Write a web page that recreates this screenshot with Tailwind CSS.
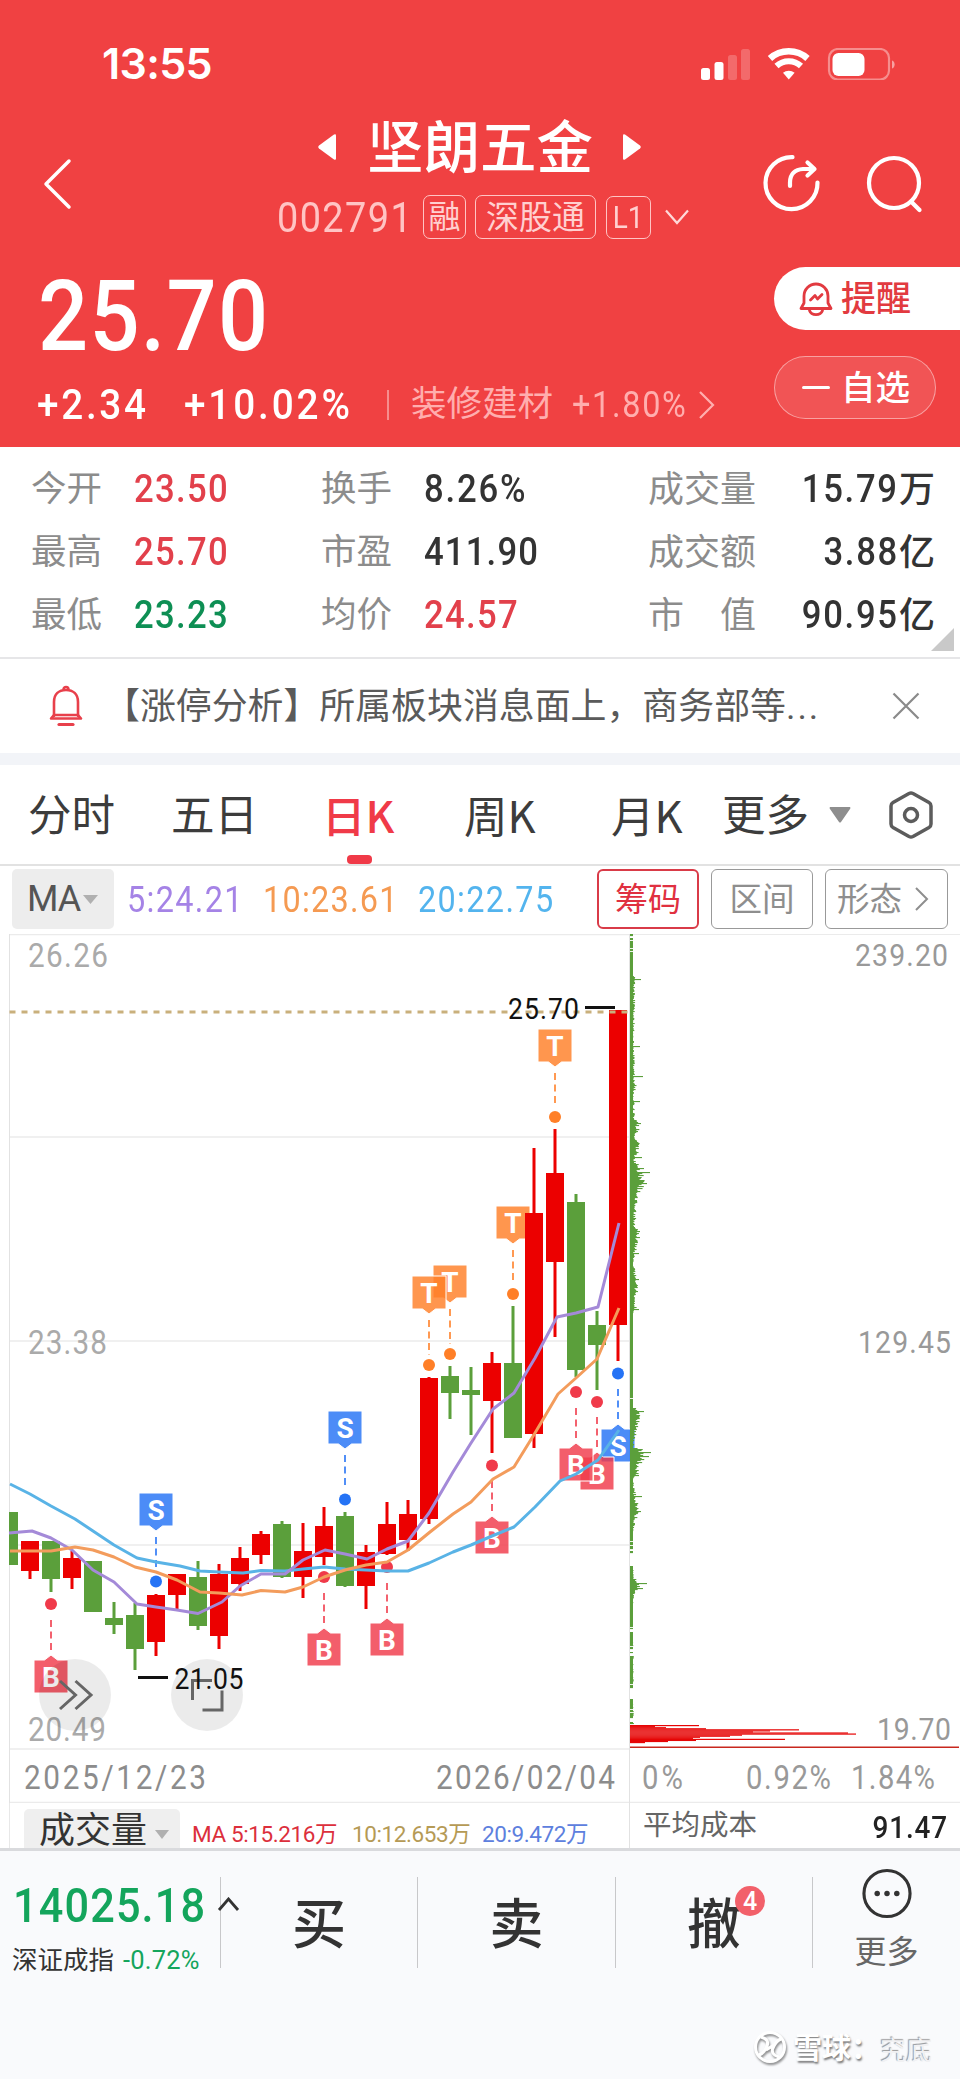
<!DOCTYPE html>
<html lang="zh-CN">
<head>
  <meta charset="UTF-8" />
  <meta name="viewport" content="width=device-width, initial-scale=1.0" />
  <title>坚朗五金 002791</title>
  <script src="https://cdn.jsdelivr.net/npm/@tailwindcss/browser@4"></script>
</head>
<body class="w-[960px] bg-white text-[#333] font-[Roboto,'Noto_Sans_CJK_SC',sans-serif] leading-none whitespace-nowrap overflow-x-hidden">

  <!-- Header -->
  <header class="h-[447px] bg-[#f04142] text-white">
    <!-- Status bar -->
    <div class="h-[127px] flex items-center justify-between pl-[102px] pr-[65px]">
      <span class="text-[43px] font-semibold font-[Inter,sans-serif] tracking-[-0.700px]">13:55</span>
      <svg class="w-[194px] h-[32px]" viewBox="0 0 194 32" fill="none">
        <rect x="0" y="20" width="9" height="12" rx="2.500" fill="#fff"/>
        <rect x="13.500" y="14" width="9" height="18" rx="2.500" fill="#fff"/>
        <rect x="27" y="7" width="9" height="25" rx="2.500" fill="#fff" fill-opacity=".22"/>
        <rect x="40" y="1" width="9" height="31" rx="2.500" fill="#fff" fill-opacity=".22"/>
        <path d="M69 10.500a28 28 0 0 1 37.500 0" stroke="#fff" stroke-width="6.500"/>
        <path d="M75.500 18a18 18 0 0 1 24.500 0" stroke="#fff" stroke-width="6"/>
        <path d="M82 24.800a9 9 0 0 1 11.600 0L87.800 31.500z" fill="#fff"/>
        <rect x="128" y="1" width="60" height="30.500" rx="9" stroke="#fff" stroke-opacity=".4" stroke-width="2.200"/>
        <rect x="131.500" y="5" width="32" height="23" rx="6" fill="#fff"/>
        <path d="M191 12.500c3.500 1 3.500 7 0 8z" fill="#fff" fill-opacity=".5"/>
      </svg>
    </div>

    <!-- Title -->
    <div class="h-[130px] flex">
      <svg class="w-[32px] h-[56px] ml-[42px] mt-[29px]" viewBox="0 0 32 56" fill="none" stroke="#fff" stroke-width="3.500" stroke-linecap="round" stroke-linejoin="round"><path d="M27 5 4 28 27 51"/></svg>
      <div class="ml-[203px] w-[412px]">
        <div class="h-[40px] flex items-center ml-[41px]">
          <svg class="w-[18px] h-[28px]" viewBox="0 0 18 28" fill="#fff"><path d="M16 1.500q2-1 2 1v23q0 2-2 1L1 15.500q-1.500-1.500 0-3z"/></svg>
          <h1 class="text-[56.500px] font-medium ml-[31px] mr-[30px] pt-[4px]">坚朗五金</h1>
          <svg class="w-[18px] h-[28px]" viewBox="0 0 18 28" fill="#fff"><path d="M2 1.500q-2-1-2 1v23q0 2 2 1l15-11q1.500-1.500 0-3z"/></svg>
        </div>
        <div class="mt-[27px] h-[46px] flex items-center text-[#ffd0d0]">
          <span class="w-[146px] text-[42px] text-[#ffc4c4] pt-[2px]"><span class="inline-block origin-left scale-x-[.9] tracking-[1.600px]">002791</span></span>
          <span class="w-[43px] h-[44px] rounded-[7px] border-[1.500px] border-[#ffc4c4] text-[32px] leading-[43px] text-center">融</span>
          <span class="w-[121px] h-[44px] rounded-[7px] border-[1.500px] border-[#ffc4c4] text-[33px] leading-[43px] text-center ml-[9px]">深股通</span>
          <span class="w-[45px] h-[43px] rounded-[7px] border-[1.500px] border-[#ffc4c4] text-[31px] leading-[41px] text-center ml-[10px]"><span class="inline-block scale-x-[.9]">L1</span></span>
          <svg class="w-[24px] h-[16px] ml-[14px]" viewBox="0 0 24 16" fill="none" stroke="#ffd9d9" stroke-width="2.200"><path d="M1 1.500 12 14 23 1.500"/></svg>
        </div>
      </div>
      <svg class="w-[60px] h-[60px] ml-[72px] mt-[26px]" viewBox="0 0 60 60" fill="none" stroke="#fff" stroke-width="4.200" stroke-linecap="round" stroke-linejoin="round">
        <path d="M31.500 4.200A26 26 0 1 0 56.500 29.500"/>
        <path d="M29 33v-3.500C29 21 34 16.500 42 16H53M46.500 9.500 53.500 16 46.500 22.500"/>
      </svg>
      <svg class="w-[60px] h-[60px] ml-[44px] mt-[26px]" viewBox="0 0 60 60" fill="none" stroke="#fff" stroke-width="4.200" stroke-linecap="round">
        <circle cx="29" cy="30" r="25"/><path d="M46 48.500 54.500 57"/>
      </svg>
    </div>

    <!-- Price -->
    <div class="flex justify-between">
      <div>
        <div class="h-[116px] flex items-center pl-[38px] pt-[3px] text-[98px] font-medium"><span class="inline-block origin-left scale-x-[.9] tracking-[1.400px]">25.70</span></div>
        <div class="h-[62px] flex items-center text-[43px] font-medium pt-[1px]">
          <span class="ml-[37px] w-[147px]"><span class="inline-block origin-left scale-x-[.9] tracking-[3px]">+2.34</span></span>
          <span class="w-[203px]"><span class="inline-block origin-left scale-x-[.9] tracking-[3.200px]">+10.02%</span></span>
          <i class="w-[2px] h-[30px] bg-white/40 mr-[22px]"></i>
          <span class="text-[35.500px] font-normal text-[#ffaeae] w-[161px]">装修建材</span>
          <span class="text-[36px] font-normal text-[#ffaeae] w-[127px]"><span class="inline-block origin-left scale-x-[.9] tracking-[1.900px]">+1.80%</span></span>
          <svg class="w-[16px] h-[28px]" viewBox="0 0 16 28" fill="none" stroke="#ffaeae" stroke-width="2.200"><path d="M1 1 14 14 1 27"/></svg>
        </div>
      </div>
      <div class="w-[186px] pt-[10px]">
        <div class="h-[63px] bg-white rounded-l-full flex items-center text-[#e23a40] text-[35px] font-medium">
          <svg class="w-[34px] h-[36px] ml-[25px] mr-[8px]" viewBox="0 0 34 36" fill="none" stroke="#e23a40" stroke-width="2.800" stroke-linejoin="round" stroke-linecap="round">
            <path d="M5 22V15a12 12 0 0 1 24 0v7l3 5.500H2z"/><path d="M10.500 29.500c2 5.500 11 5.500 13 0M11.500 19l4.500-4.500 2.500 3.500 4.500-4.500"/>
          </svg>
          <span class="pt-[2px]">提醒</span>
        </div>
        <div class="mt-[26px] w-[162px] h-[63px] bg-white/10 border-[1.500px] border-white/45 rounded-full flex items-center text-[34.500px] font-medium">
          <i class="w-[28px] h-[3px] bg-white ml-[27px] mr-[11px] rounded"></i><span class="pt-[2px]">自选</span>
        </div>
      </div>
    </div>
  </header>

  <!-- Quote stats -->
  <section class="relative h-[212px] pt-[11px] border-b-[2px] border-[#e6e6e8] text-[38.500px] font-medium">
    <div class="h-[63px] flex items-center pl-[31px] pr-[25px]">
      <span class="w-[103px] text-[35.500px] font-normal text-[#8c8c8c]">今开</span><span class="w-[187px] text-[#e2404b]"><span class="inline-block origin-left scale-x-[.9] tracking-[1.500px]">23.50</span></span>
      <span class="w-[103px] text-[35.500px] font-normal text-[#8c8c8c]">换手</span><span class="w-[224px]"><span class="inline-block origin-left scale-x-[.9] tracking-[2px]">8.26%</span></span>
      <span class="text-[36px] font-normal text-[#8c8c8c]">成交量</span><span class="ml-auto"><span class="inline-block origin-right scale-x-[.9] tracking-[1.900px]">15.79</span><span class="text-[36px]">万</span></span>
    </div>
    <div class="h-[63px] flex items-center pl-[31px] pr-[25px]">
      <span class="w-[103px] text-[35.500px] font-normal text-[#8c8c8c]">最高</span><span class="w-[187px] text-[#e2404b]"><span class="inline-block origin-left scale-x-[.9] tracking-[1.500px]">25.70</span></span>
      <span class="w-[103px] text-[35.500px] font-normal text-[#8c8c8c]">市盈</span><span class="w-[224px]"><span class="inline-block origin-left scale-x-[.9] tracking-[1.300px]">411.90</span></span>
      <span class="text-[36px] font-normal text-[#8c8c8c]">成交额</span><span class="ml-auto"><span class="inline-block origin-right scale-x-[.9] tracking-[1.900px]">3.88</span><span class="text-[36px]">亿</span></span>
    </div>
    <div class="h-[63px] flex items-center pl-[31px] pr-[25px]">
      <span class="w-[103px] text-[35.500px] font-normal text-[#8c8c8c]">最低</span><span class="w-[187px] text-[#0e8f54]"><span class="inline-block origin-left scale-x-[.9] tracking-[1.500px]">23.23</span></span>
      <span class="w-[103px] text-[35.500px] font-normal text-[#8c8c8c]">均价</span><span class="w-[224px] text-[#e2404b]"><span class="inline-block origin-left scale-x-[.9] tracking-[1.500px]">24.57</span></span>
      <span class="text-[36px] font-normal text-[#8c8c8c]">市　值</span><span class="ml-auto"><span class="inline-block origin-right scale-x-[.9] tracking-[1.900px]">90.95</span><span class="text-[36px]">亿</span></span>
    </div>
    <svg class="absolute right-[6px] bottom-[6px] w-[23px] h-[23px]" viewBox="0 0 23 23"><path d="M23 0V23H0z" fill="#c9c9c9"/></svg>
  </section>

  <!-- Notice -->
  <section class="h-[94px] flex items-center text-[35.900px] text-[#5a5a5a]">
    <svg class="w-[34px] h-[42px] ml-[49px] mr-[21px]" viewBox="0 0 34 42" fill="none" stroke="#e8404b" stroke-width="2.600" stroke-linejoin="round" stroke-linecap="round">
      <path d="M5 31V17C5 9 10 5 17 5s12 4 12 12v14M14.500 4.500a2.500 2.500 0 0 1 5 0"/><path d="M2 33.500 5 30h24l3 3.500z"/><path d="M10 39.500h14" stroke-width="3.200"/>
    </svg>
    <span class="pt-[3px]">【涨停分析】所属板块消息面上，商务部等<span class="tracking-[2px]">...</span></span>
    <svg class="w-[28px] h-[28px] ml-auto mr-[40px]" viewBox="0 0 28 28" stroke="#8a8a8a" stroke-width="2.200"><path d="M1.500 1.500 26.500 26.500M26.500 1.500 1.500 26.500"/></svg>
  </section>
  <div class="h-[12px] bg-[#f2f4f8]"></div>

  <!-- Period tabs -->
  <nav class="relative h-[101px] flex items-center border-b-[2px] border-[#e2e2e2] text-[43.500px] text-[#3c3c3c]">
    <span class="ml-[28px] w-[143px] pt-[4px]">分时</span>
    <span class="w-[151px] pt-[4px]">五日</span>
    <span class="w-[142px] text-[#f03a48] font-medium font-['Noto_Sans_CJK_SC',sans-serif]">日K</span>
    <span class="w-[147px] font-['Noto_Sans_CJK_SC',sans-serif]">周K</span>
    <span class="w-[111px] font-['Noto_Sans_CJK_SC',sans-serif]">月K</span>
    <span class="pt-[4px]">更多</span>
    <svg class="w-[22px] h-[16px] ml-[20px]" viewBox="0 0 22 16" fill="#8e8e8e"><path d="M1 0h20q1 1 0 2L12 15q-1 1-2 0L1 2Q0 1 1 0z"/></svg>
    <svg class="w-[46px] h-[50px] ml-[37px]" viewBox="0 0 46 50" fill="none" stroke="#5c5c5c" stroke-width="3.500" stroke-linejoin="round">
      <path d="M21 3.500q2-1 4 0L41 12.500q2 1.200 2 3.500v18q0 2.300-2 3.500L25 46.500q-2 1-4 0L5 37.500Q3 36.300 3 34V16q0-2.300 2-3.500z"/><circle cx="23" cy="25" r="6.500"/>
    </svg>
    <i class="absolute left-[347px] bottom-0 w-[25px] h-[9px] rounded-[4px] bg-[#f03a48]"></i>
  </nav>

  <!-- MA bar -->
  <div class="h-[68px] flex items-center text-[36px]">
    <div class="ml-[12px] w-[102px] h-[60px] mb-[3px] bg-[#ededed] rounded-[5px] flex items-center pl-[15px] pt-[1px] text-[#555]"><span class="tracking-[-1px]">MA</span>
      <svg class="w-[15px] h-[9px] ml-[3px]" viewBox="0 0 15 9" fill="#b0b0b0"><path d="M0 0h15L7.500 9z"/></svg>
    </div>
    <span class="ml-[13px] w-[136px] text-[#a583e6]"><span class="inline-block origin-left scale-x-[.9] tracking-[1.500px]">5:24.21</span></span>
    <span class="w-[155px] text-[#f59a52]"><span class="inline-block origin-left scale-x-[.9] tracking-[1.400px]">10:23.61</span></span>
    <span class="w-[179px] text-[#53b4ee]"><span class="inline-block origin-left scale-x-[.9] tracking-[1.500px]">20:22.75</span></span>
    <span class="w-[102px] h-[60px] mb-[3px] border-[2px] border-[#d93b48] rounded-[6px] text-[#e03040] text-[33px] leading-[58px] text-center">筹码</span>
    <span class="ml-[12px] w-[102px] h-[60px] mb-[3px] border-[1.500px] border-[#999] rounded-[6px] text-[#8e8e8e] text-[32.500px] leading-[60px] text-center">区间</span>
    <span class="ml-[12px] w-[123px] h-[60px] mb-[3px] border-[1.500px] border-[#999] rounded-[6px] text-[#8e8e8e] text-[32.500px] flex items-center pl-[11px]"><span class="pt-[3px]">形态</span>
      <svg class="w-[14px] h-[24px] ml-[13px]" viewBox="0 0 14 24" fill="none" stroke="#8e8e8e" stroke-width="2"><path d="M1 1 12 12 1 23"/></svg>
    </span>
  </div>

  <!-- K line and chip distribution, one svg unit per pixel, y starts at 934 -->
  <svg id="chart" class="block w-[960px] h-[869px]" viewBox="0 934 960 869"></svg>

  <!-- Volume header -->
  <div class="h-[45px] flex border-[#e8e8e8] ml-[9px] border-l">
    <div class="w-[619px] flex items-start">
      <div class="ml-[14px] mt-[6px] w-[156px] h-[39px] bg-[#efefef] rounded-t-[5px] flex items-start pl-[15px] text-[36px]"><span class="pt-[5px] leading-[34px]">成交量</span>
        <svg class="w-[14px] h-[9px] ml-[8px] mt-[21px]" viewBox="0 0 14 9" fill="#b0b0b0"><path d="M0 0h14L7 9z"/></svg>
      </div>
      <div class="mt-[20px] ml-[12px] flex text-[22.500px] tracking-[-0.400px]">
        <span class="w-[160px] text-[#dc2f3c]">MA 5:15.216万</span>
        <span class="w-[130px] text-[#b59a55]">10:12.653万</span>
        <span class="text-[#5d80de]">20:9.472万</span>
      </div>
    </div>
    <div class="w-[331px] border-l border-[#e2e2e2] flex justify-between pl-[13px] pr-[12px] pt-[9px]">
      <span class="text-[28.500px] text-[#666]">平均成本</span>
      <span class="text-[31px] text-[#222] font-medium inline-block origin-right scale-x-[.9] tracking-[1px]">91.47</span>
    </div>
  </div>

  <!-- Bottom bar -->
  <footer class="relative h-[231px] bg-[#f9fafc] border-t-[3px] border-[#d9dadd]">
    <div class="flex pt-[26px]">
      <div class="w-[220px] h-[91px]">
        <div class="pl-[13px] pt-[5px] text-[48px] font-medium text-[#14a55c]"><span class="inline-block origin-left scale-x-[.9] tracking-[1.300px]">14025.18</span></div>
        <div class="mt-[17px] pl-[12px] text-[25.500px] flex items-center"><span class="pt-[1px]">深证成指</span><span class="ml-[9px] text-[#14a55c] tracking-[0.200px]">-0.72%</span></div>
      </div>
      <div class="w-[197px] h-[91px] border-l border-[#c8c8ca] text-center text-[54px] font-medium leading-[98px]">买</div>
      <div class="w-[198px] h-[91px] border-l border-[#c8c8ca] text-center text-[54px] font-medium leading-[98px]">卖</div>
      <div class="relative w-[197px] h-[91px] border-l border-[#c8c8ca] text-center text-[54px] font-medium leading-[98px]">撤
        <i class="absolute left-[119px] top-[9px] w-[30px] h-[30px] rounded-full bg-[#f2606a] text-white text-[25px] leading-[31px] not-italic font-medium">4</i>
      </div>
      <div class="w-[148px] h-[91px] border-l border-[#c8c8ca] flex flex-col items-center">
        <svg class="w-[52px] h-[52px] -mt-[9px]" viewBox="0 0 52 52" fill="#333"><circle cx="26" cy="26" r="23.500" fill="none" stroke="#333" stroke-width="3.200"/><circle cx="16" cy="26" r="2.800"/><circle cx="26" cy="26" r="2.800"/><circle cx="36" cy="26" r="2.800"/></svg>
        <span class="mt-[17px] text-[32px] text-[#666]">更多</span>
      </div>
    </div>
    <svg class="absolute left-[217px] top-[46px] w-[23px] h-[15px]" viewBox="0 0 23 15" fill="none" stroke="#333" stroke-width="2.800"><path d="M2 13 11.500 2 21 13"/></svg>
    <!-- Watermark -->
    <div class="absolute left-[752px] top-[178px] flex items-center h-[38px]">
      <svg class="w-[36px] h-[38px] drop-shadow-[1px_2px_1px_rgba(0,0,0,0.45)]" viewBox="0 0 36 38" fill="none" stroke="#fff" stroke-width="3"><circle cx="18" cy="18" r="14.500"/><path d="M9 8q10 3 5 11-2 5-7 7M27 28q-10-3-5-11 2-5 7-7M14 21l8-5" /></svg>
      <span class="ml-[5px] w-[87px] pt-[2px] text-[29px] font-bold text-white [text-shadow:1px_2px_2px_rgba(0,0,0,0.5)]">雪球：</span>
      <span class="pt-[6px] text-[26px] text-[#f1f1f3] [text-shadow:-1px_-1px_1px_rgba(0,0,0,0.4)]">究底</span>
    </div>
  </footer>

  <script>
    const RED = '#ec0000', GREEN = '#5b9f3b';
    const out = [];
    const line = (x1, y1, x2, y2, c, w, extra = '') =>
      out.push(`<line x1="${x1}" y1="${y1}" x2="${x2}" y2="${y2}" stroke="${c}" stroke-width="${w}" ${extra}/>`);
    const rect = (x, y, w, h, c) => out.push(`<rect x="${x}" y="${y}" width="${w}" height="${h}" fill="${c}"/>`);
    // digits are drawn slightly condensed
    const text = (s, x, y, len, size, c) =>
      out.push(`<text transform="translate(${x} ${y}) scale(.9 1)" textLength="${len / 0.9}" font-size="${size}" fill="${c}">${s}</text>`);

    // grid
    [934.5, 1137, 1341, 1545, 1749, 1802.5].forEach(y => line(9, y, 630, y, '#ebebeb', 1.5));
    line(630, 934.5, 960, 934.5, '#ebebeb', 1);
    line(630, 1802.5, 960, 1802.5, '#ebebeb', 1.5);
    line(9.5, 934, 9.5, 1803, '#e2e2e2', 1);
    line(629.5, 934, 629.5, 1803, '#e2e2e2', 1);

    // trade markers: letter, x, box top, dot y
    const markers = [
      ['S', 156, 1493, 1581.5], ['S', 345, 1411, 1499.5], ['T', 450, 1265, 1354], ['T', 429, 1276, 1365],
      ['T', 513, 1206, 1294], ['T', 555, 1029, 1117], ['B', 51, 1660, 1604], ['B', 324, 1633, 1577],
      ['B', 387, 1623, 1567], ['B', 492, 1521, 1465.5], ['S', 618, 1429, 1373.5], ['B', 597, 1457, 1402], ['B', 576, 1448, 1392]
    ];
    const fills = { T: '#ff7f27', S: '#2573f5', B: '#f03a4a' };
    markers.forEach(([t, x, y, dot]) => {
      const c = fills[t], up = dot > y;
      const tip = up ? `M${x - 17} ${y}h34v33h-10.500l-6.500 5-6.500-5h-10.500z` : `M${x - 17} ${y + 33}h34V${y}h-10.500l-6.500-5-6.500 5h-10.500z`;
      line(x, up ? y + 44 : y - 10, x, up ? dot - 10 : dot + 12, c, 2, 'stroke-dasharray="7 4.500" stroke-opacity=".8"');
      out.push(`<path d="${tip}" fill="${c}" fill-opacity=".82" stroke="#fff" stroke-width="1"/>`);
      out.push(`<text x="${x}" y="${y + 26.5}" text-anchor="middle" font-size="28" font-weight="700" fill="#fff">${t}</text>`);
      out.push(`<circle cx="${x}" cy="${dot}" r="6" fill="${c}"/>`);
    });

    // candles: colour, body top, body bottom, wick top, wick bottom
    const candles = [
      ['g', 1512, 1565, 1512, 1565], ['r', 1541, 1571, 1541, 1579], ['g', 1541, 1579, 1541, 1592], ['r', 1558, 1578, 1551, 1589],
      ['g', 1561, 1612, 1561, 1612], ['g', 1618, 1625, 1602, 1634], ['g', 1615, 1649, 1603, 1670], ['r', 1595, 1642, 1594, 1656],
      ['r', 1574, 1595, 1574, 1609], ['g', 1577, 1626, 1561, 1630], ['r', 1574, 1636, 1564, 1649], ['r', 1558, 1584, 1547, 1591],
      ['r', 1534, 1555, 1531, 1564], ['g', 1524, 1577, 1521, 1578], ['r', 1551, 1577, 1523, 1598], ['r', 1526, 1557, 1507, 1565],
      ['g', 1516, 1586, 1512, 1587], ['r', 1552, 1586, 1545, 1609], ['r', 1524, 1554, 1502, 1555], ['r', 1514, 1540, 1500, 1551],
      ['r', 1378, 1519, 1377, 1524], ['g', 1376, 1393, 1366, 1419], ['g', 1390, 1395, 1367, 1435], ['r', 1363, 1401, 1352, 1453],
      ['g', 1363, 1438, 1306, 1438], ['r', 1213, 1434, 1148, 1448], ['r', 1173, 1262, 1129, 1337], ['g', 1202, 1370, 1194, 1377],
      ['g', 1325, 1345, 1311, 1390], ['r', 1010, 1325, 1010, 1361]
    ];
    candles.forEach(([k, top, bottom, high, low], i) => {
      const x = 9 + i * 21, c = k === 'r' ? RED : GREEN;
      if (i === 0) { rect(9, top, 9, bottom - top, c); return; }
      rect(x - 1.5, high, 3, low - high, c);
      rect(x - 9, top, 18, bottom - top, c);
    });
    line(9.5, 1012, 628, 1012, '#c9b07c', 3, 'stroke-dasharray="6 6"');

    // moving averages
    const ma = [
      ['#59b3e6', '10,1484 30,1494 51,1506 75,1519 93,1531 114,1545 137,1558 156,1562 180,1566 200,1571 219,1572 243,1573 261,1570.500 285,1571 303,1569 324,1567 345,1569 366,1570 387,1571 408,1571 429,1563 453,1552 471,1545 492,1536 514,1527 535,1507 560,1481 576,1474 598,1460 619,1430'],
      ['#a48ad8', '9,1533 32,1531 51,1538 72,1550 93,1570 114,1582 137,1604 156,1607 177,1610 198,1613.500 222,1602 240,1586 261,1574 285,1574 303,1560 325,1550 345,1554 367,1559 387,1549 408,1541 429,1513 453,1472 471,1443 493,1409 514,1393 535,1358 557,1317 576,1313 598,1307 619,1223'],
      ['#f39c5c', '10,1551 32,1551 51,1551 75,1547 93,1550 114,1557 135,1567 156,1572 177,1580 200,1592 219,1593 242,1595 261,1590.500 285,1592 303,1587 324,1577 345,1570 366,1565 387,1562 408,1550 430,1532 453,1514 471,1502 493,1479 514,1467 535,1433 558,1394 576,1378 597,1359 619,1308']
    ];
    ma.forEach(([c, pts]) => out.push(`<polyline points="${pts}" fill="none" stroke="${c}" stroke-width="3" stroke-linejoin="round"/>`));

    // chip distribution above cost: [y, width] envelope
    const env = [[934, 3], [975, 3], [976, 5], [1010, 5], [1040, 4], [1080, 5], [1086, 7], [1092, 4], [1118, 5], [1122, 8], [1130, 10], [1136, 6],
      [1145, 10], [1160, 6], [1170, 12], [1184, 15], [1192, 10], [1205, 6], [1225, 6], [1235, 10], [1255, 5], [1263, 3], [1270, 6], [1290, 8],
      [1298, 5], [1309, 7], [1314, 3], [1365, 3], [1407, 3], [1409, 10], [1425, 9], [1440, 4], [1447, 4], [1449, 14], [1458, 15], [1466, 9],
      [1476, 8], [1480, 3], [1490, 5], [1500, 7], [1510, 10], [1518, 7], [1526, 4], [1536, 3], [1552, 3],
      [1566, 3], [1577, 4], [1582, 11], [1588, 11], [1594, 4], [1606, 3], [1628, 3], [1632, 3], [1672, 4], [1688, 3], [1699, 3], [1724, 4]];
    const gaps = [[936, 938], [940, 941], [948, 949], [951, 952], [1398, 1399], [1541, 1542], [1545, 1546], [1549, 1551], [1553, 1566], [1627, 1628], [1629, 1632], [1646, 1647],
      [1649, 1652], [1653, 1656], [1684, 1685], [1688, 1699], [1709, 1710], [1712, 1713], [1718, 1722]];
    const spikes = { 979: 11, 1046: 10, 1076: 13, 1101: 10, 1123: 11, 1157: 12, 1168: 14, 1172: 20, 1183: 17, 1231: 10, 1253: 9, 1279: 9, 1309: 9,
      1411: 14, 1452: 21, 1456: 19, 1475: 9, 1496: 12, 1511: 11, 1583: 17, 1588: 13 };
    let k = 0;
    for (let y = 934; y < 1724; y++) {
      if (gaps.some(([a, b]) => y >= a && y < b)) continue;
      while (k < env.length - 2 && env[k + 1][0] <= y) k++;
      const [y0, w0] = env[k], [y1, w1] = env[k + 1];
      const base = w0 + (w1 - w0) * (y - y0) / (y1 - y0);
      const n = Math.abs(Math.sin(y * 12.9898) * 43758.5453) % 1;
      rect(630, y, spikes[y] || Math.max(3, base <= 3 ? 3 : base * (0.55 + n * 0.5)), 1.1, GREEN);
    }
    // chips below cost
    const low = [69, 25, 36, 76, 169, 140, 123, 218, 226, 112, 100, 70, 63, 155, 66, 38, 15];
    low.forEach((w, i) => rect(630, 1725 + i * 1.06, w, 1.2, '#e60505'));
    line(630, 1747.3, 959, 1747.3, '#c8281e', 1.4);

    // axis labels
    text('26.26', 28, 966.5, 80, 33, '#aaa');
    text('23.38', 28, 1354, 79, 33, '#aaa');
    text('20.49', 28, 1741, 78, 33, '#aaa');
    text('239.20', 855, 966, 93, 31.5, '#999');
    text('129.45', 858, 1353, 93, 31.5, '#999');
    text('19.70', 877, 1740, 74, 31.5, '#999');
    text('2025/12/23', 24, 1789, 182, 33, '#8c8c8c');
    text('2026/02/04', 436, 1789, 179, 33, '#8c8c8c');
    text('0%', 642, 1789, 41, 32.5, '#999');
    text('0.92%', 746, 1789, 85, 32.5, '#999');
    text('1.84%', 851, 1789, 84, 32.5, '#999');

    // high and low callouts
    text('25.70', 508, 1019, 71, 29.5, '#111');
    line(585, 1007.5, 615, 1007.5, '#111', 3);
    out.push('<circle cx="75" cy="1695" r="36" fill="#000" fill-opacity=".08"/><circle cx="207" cy="1695" r="36" fill="#000" fill-opacity=".08"/>');
    out.push('<path d="M60 1681 75.500 1695 60 1709M75.500 1681 91 1695 75.500 1709" fill="none" stroke="#666" stroke-width="3"/>');
    out.push('<path d="M192.500 1700V1680.500H212M222 1690.500V1710H202.500" fill="none" stroke="#666" stroke-width="3"/>');
    text('21.05', 174.5, 1689, 69, 29.5, '#111');
    line(138, 1677.5, 168, 1677.5, '#111', 3);

    document.getElementById('chart').innerHTML = out.join('');
  </script>
</body>
</html>
